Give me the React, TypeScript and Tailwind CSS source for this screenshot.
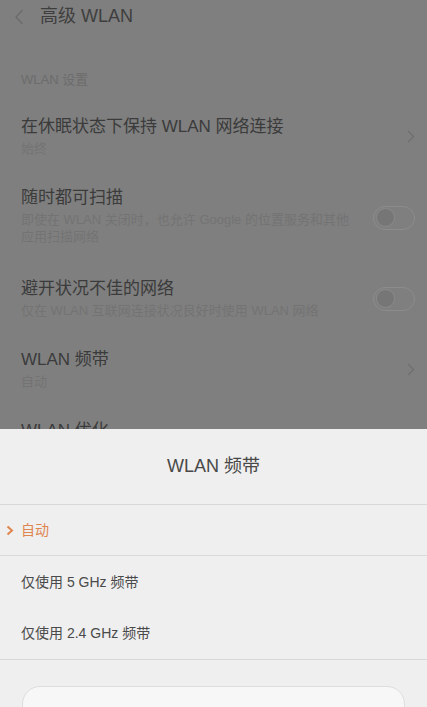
import React from 'react';

const font = { fontFamily: '"Liberation Sans", "Noto Sans CJK SC", sans-serif' };

function Chevron() {
  return (
    <svg width="8" height="13" viewBox="0 0 8 13" className="shrink-0">
      <path d="M1 1 L6.5 6.5 L1 12" fill="none" stroke="#6f6f6f" strokeWidth="1.3" />
    </svg>
  );
}

function Toggle() {
  return (
    <div className="w-[42px] h-[24px] rounded-full border border-[#8c8c8c] flex items-center px-[2px] shrink-0">
      <div className="w-[19px] h-[19px] rounded-full bg-[#767676] border border-[#8a8a8a]" />
    </div>
  );
}

interface RowProps {
  title: string;
  sub?: string[];
  right?: 'chevron' | 'toggle';
  tall?: boolean;
}

function Row({ title, sub = [], right, tall }: RowProps) {
  return (
    <div className={`flex items-center pl-[21px] pr-[12px] ${tall ? 'h-[91px]' : 'h-[71px]'}`}>
      <div className="flex-1 self-start pt-[15px]">
        <div className="text-[17px] leading-[22px] text-[#3b3b3b]">{title}</div>
        {sub.length > 0 && (
          <div className="mt-[2px] text-[13px] leading-[17px] text-[#737373]">
            {sub.map((s) => (
              <div key={s}>{s}</div>
            ))}
          </div>
        )}
      </div>
      {right === 'chevron' && <Chevron />}
      {right === 'toggle' && <Toggle />}
    </div>
  );
}

export default function App() {
  return (
    <div className="relative w-[427px] h-[707px] overflow-hidden bg-[#7f7f7f]" style={font}>
      {/* Header */}
      <div className="h-[33px] flex items-center pl-[15px]">
        <svg width="9" height="16" viewBox="0 0 9 16">
          <path d="M7.5 1 L1 8 L7.5 15" fill="none" stroke="#6b6b6b" strokeWidth="1.3" />
        </svg>
        <span className="ml-[16px] text-[18px] text-[#3e3e3e]">高级 WLAN</span>
      </div>

      <div className="h-[68px] pt-[39px] pl-[21px] text-[13px] leading-[16px] text-[#6c6c6c]">WLAN 设置</div>

      <Row title="在休眠状态下保持 WLAN 网络连接" sub={['始终']} right="chevron" />
      <Row
        title="随时都可扫描"
        sub={['即使在 WLAN 关闭时，也允许 Google 的位置服务和其他', '应用扫描网络']}
        right="toggle"
        tall
      />
      <Row title="避开状况不佳的网络" sub={['仅在 WLAN 互联网连接状况良好时使用 WLAN 网络']} right="toggle" />
      <Row title="WLAN 频带" sub={['自动']} right="chevron" />
      <Row title="WLAN 优化" sub={['']} />

      {/* Bottom sheet */}
      <div className="absolute left-0 right-0 top-[429px] bottom-0 bg-[#efefef]">
        <div className="h-[76px] flex items-center justify-center text-[18px] text-[#484848] border-b border-[#d8d8d8]">
          WLAN 频带
        </div>
        <div className="h-[51px] flex items-center pl-[6px] text-[14px] text-[#e0854e] border-b border-[#dadada]">
          <svg width="8" height="11" viewBox="0 0 8 11" className="mr-[7px]">
            <path d="M1.5 1.5 L6 5.5 L1.5 9.5" fill="none" stroke="#e0854e" strokeWidth="2" />
          </svg>
          自动
        </div>
        <div className="h-[52px] flex items-center pl-[21px] text-[14px] text-[#4a4a4a]">仅使用 5 GHz 频带</div>
        <div className="h-[52px] flex items-center pl-[21px] text-[14px] text-[#4a4a4a] border-b border-[#d8d8d8]">
          仅使用 2.4 GHz 频带
        </div>
        <div className="pt-[26px] px-[22px]">
          <div className="h-[50px] rounded-[18px] bg-[#f7f7f7] border border-[#dddddd]" />
        </div>
      </div>
    </div>
  );
}
